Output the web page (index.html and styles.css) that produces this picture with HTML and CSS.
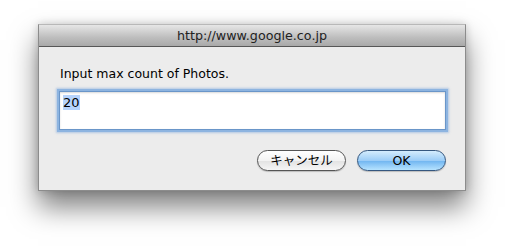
FILE: index.html
```html
<!DOCTYPE html>
<html>
<head>
    <title>Prompt</title>
    <link rel="stylesheet" href="styles.css">
</head>
<body>
    <!-- Prompt dialog -->
    <div class="stage">
        <div class="dialog">
            <div class="title-bar">http://www.google.co.jp</div>
            <div class="dialog-body">
                <div class="prompt-label">Input max count of Photos.</div>
                <div class="prompt-input"><span class="selected">20</span></div>
                <div class="dialog-actions">
                    <button class="btn cancel">キャンセル</button>
                    <button class="btn ok">OK</button>
                </div>
            </div>
        </div>
    </div>
</body>
</html>
```

FILE: styles.css
```css
/* Page */
body {
    margin: 0;
    min-height: 246px;
    background-color: #ffffff;
    font-family: "DejaVu Sans", "Noto Sans CJK JP", sans-serif;
    color: #000000;
}

.stage {
    display: flex;
    min-height: 246px;
    box-sizing: border-box;
    padding: 24px 0 0 38px;
    align-items: flex-start;
}

/* Dialog window */
.dialog {
    width: 426px;
    height: 165px;
    border: 1px solid #8c8c8c;
    border-top-color: #b8b8b8;
    background-color: #ececec;
    box-shadow: 0 16px 26px rgba(0, 0, 0, 0.5), 0 0 8px rgba(0, 0, 0, 0.18);
    display: flex;
    flex-direction: column;
}

.title-bar {
    height: 21px;
    line-height: 22px;
    text-align: center;
    font-size: 12.7px;
    color: #222222;
    background: linear-gradient(#e6e6e6, #bdbdbd 60%, #a9a9a9);
    border-bottom: 1px solid #575757;
}

.dialog-body {
    padding: 19px 19px 0 20px;
}

.prompt-label {
    font-size: 12.5px;
    line-height: 16px;
    margin-left: 1px;
}

/* Text field with focus ring */
.prompt-input {
    margin-top: 9px;
    height: 33px;
    padding: 2px 3px;
    background-color: #ffffff;
    border: 1px solid #6a96c9;
    box-shadow: 0 0 0 2px #8db4e0, 0 0 2px 3px rgba(120, 165, 220, 0.5), inset 0 1px 2px rgba(0, 0, 0, 0.15);
    font-size: 13px;
    line-height: 17px;
}

.selected {
    background-color: #b6d3fc;
}

/* Buttons */
.dialog-actions {
    display: flex;
    justify-content: flex-end;
    gap: 11px;
    margin-top: 20px;
}

.btn {
    width: 89px;
    height: 21px;
    border-radius: 11px;
    padding: 0;
    font-family: "DejaVu Sans", "Noto Sans CJK JP", sans-serif;
    font-size: 12.5px;
    line-height: 19px;
    color: #000000;
}

.btn.cancel {
    border: 1px solid #555555;
    background: linear-gradient(#ffffff, #f3f3f3 50%, #e2e2e2 51%, #f6f6f6);
    box-shadow: 0 1px 1px rgba(0, 0, 0, 0.2);
}

.btn.ok {
    border: 1px solid #35577f;
    background: linear-gradient(#d4ecfd, #9ccdf7 50%, #6fb4f0 51%, #b6e3ff);
    box-shadow: 0 1px 1px rgba(0, 0, 0, 0.2);
}
```
